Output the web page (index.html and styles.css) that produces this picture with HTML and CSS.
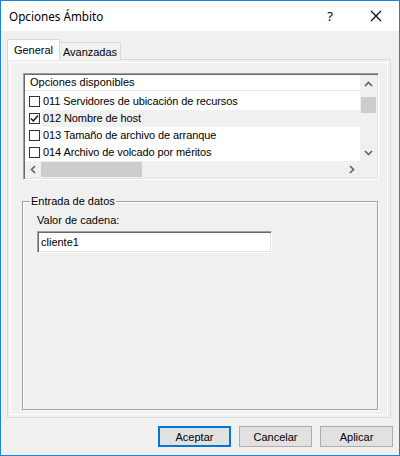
FILE: index.html
```
<!DOCTYPE html>
<html lang="es">
<head>
<meta charset="utf-8">
<title>Opciones Ámbito</title>
<link rel="stylesheet" href="styles.css">
</head>
<body>
<div class="window">
  <div class="titlebar">
    <span class="title">Opciones Ámbito</span>
    <span class="help">?</span>
    <span class="close"><svg width="12" height="12" viewBox="0 0 12 12"><path d="M1 1L11 11M11 1L1 11" stroke="#000" stroke-width="1.1" fill="none"/></svg></span>
  </div>
  <div class="body">
    <div class="tabs">
      <div class="tab active">General</div>
      <div class="tab">Avanzadas</div>
    </div>
    <div class="panel">
      <div class="listview">
        <div class="lv-main">
          <div class="lv-content">
            <div class="lv-header">Opciones disponibles</div>
            <div class="lv-rows">
              <div class="row"><span class="check"></span><span class="label">011 Servidores de ubicación de recursos</span></div>
              <div class="row"><span class="check checked"><svg width="9" height="9" viewBox="0 0 9 9"><path d="M1 4.5L3.3 7L8 1.5" stroke="#222" stroke-width="1.6" fill="none"/></svg></span><span class="label selected">012 Nombre de host</span></div>
              <div class="row"><span class="check"></span><span class="label">013 Tamaño de archivo de arranque</span></div>
              <div class="row"><span class="check"></span><span class="label">014 Archivo de volcado por méritos</span></div>
            </div>
          </div>
          <div class="vscroll">
            <div class="arrow"><svg width="9" height="6" viewBox="0 0 9 6"><path d="M1 5L4.5 1.5L8 5" stroke="#606060" stroke-width="1.6" fill="none"/></svg></div>
            <div class="vtrack"><div class="vthumb"></div></div>
            <div class="arrow"><svg width="9" height="6" viewBox="0 0 9 6"><path d="M1 1L4.5 4.5L8 1" stroke="#606060" stroke-width="1.6" fill="none"/></svg></div>
          </div>
        </div>
        <div class="hscroll">
          <div class="harrow"><svg width="6" height="9" viewBox="0 0 6 9"><path d="M5 1L1.5 4.5L5 8" stroke="#606060" stroke-width="1.6" fill="none"/></svg></div>
          <div class="htrack"><div class="hthumb"></div></div>
          <div class="harrow"><svg width="6" height="9" viewBox="0 0 6 9"><path d="M1 1L4.5 4.5L1 8" stroke="#606060" stroke-width="1.6" fill="none"/></svg></div>
          <div class="corner"></div>
        </div>
      </div>
      <fieldset class="group">
        <legend>Entrada de datos</legend>
        <div class="field-label">Valor de cadena:</div>
        <div class="input">cliente1</div>
      </fieldset>
    </div>
    <div class="buttons">
      <div class="btn default">Aceptar</div>
      <div class="btn">Cancelar</div>
      <div class="btn">Aplicar</div>
    </div>
  </div>
</div>
</body>
</html>
```
FILE: styles.css
```
* { box-sizing: border-box; }
html, body { margin: 0; padding: 0; background: #f0f0f0; }
body {
  font-family: "Liberation Sans", Arial, sans-serif;
  font-size: 11px;
  color: #000;
}
.window {
  width: 400px;
  height: 456px;
  border: 1px solid #1883d7;
  background: #f0f0f0;
  display: flex;
  flex-direction: column;
}
.titlebar {
  height: 30px;
  background: #fff;
  display: flex;
  align-items: center;
  padding-left: 8px;
  flex: none;
}
.title {
  font-family: "Noto Sans", "Liberation Sans", sans-serif;
  font-size: 11.7px;
  flex: 1;
  padding-bottom: 1px;
}
.help {
  font-family: "Noto Sans", "Liberation Sans", sans-serif;
  font-size: 13px;
  width: 46px;
  text-align: center;
}
.close {
  width: 46px;
  display: flex;
  justify-content: center;
  align-items: center;
}
.body {
  flex: 1;
  padding-top: 8px;
  display: flex;
  flex-direction: column;
}
.tabs {
  height: 21px;
  display: flex;
  align-items: flex-end;
  padding-left: 6px;
  position: relative;
  z-index: 1;
}
.tab {
  height: 18px;
  border: 1px solid #d9d9d9;
  border-bottom: none;
  background: #f0f0f0;
  display: flex;
  align-items: center;
  justify-content: center;
  width: 62px;
  margin-left: -1px;
  padding-top: 1px;
}
.tab.active {
  height: 21px;
  width: 53px;
  margin-left: 0;
  background: #fff;
  padding-bottom: 2px;
  position: relative;
  z-index: 2;
}
.panel {
  margin-top: -1px;
  margin-left: 6px;
  width: 384px;
  height: 359px;
  border: 1px solid #d9d9d9;
  background: #f0f0f0;
  box-shadow: inset 0 0 0 2px #f0f0f0, inset 0 0 0 3px #fff;
  padding: 13px 0 0 15px;
  flex: none;
}
.listview {
  width: 356px;
  height: 107px;
  border: 1px solid;
  border-color: #a0a0a0 #fff #fff #a0a0a0;
  box-shadow: inset 1px 1px 0 #696969, inset -1px -1px 0 #e3e3e3;
  padding: 1px;
  background: #fff;
  display: flex;
  flex-direction: column;
}
.lv-main {
  height: 86px;
  display: flex;
}
.lv-content {
  flex: 1;
  background: #fff;
  overflow: hidden;
}
.lv-header {
  height: 16px;
  border-bottom: 1px solid #e5e5e5;
  padding-left: 5px;
  line-height: 15px;
  white-space: nowrap;
}
.lv-rows { padding-top: 2px; }
.row {
  height: 17px;
  display: flex;
  align-items: center;
  padding-left: 4px;
  white-space: nowrap;
}
.check {
  width: 11px;
  height: 11px;
  border: 1px solid #333;
  background: #fff;
  margin-right: 2px;
  display: flex;
  align-items: center;
  justify-content: center;
  flex: none;
}
.label {
  height: 17px;
  line-height: 17px;
  padding-left: 1px;
  letter-spacing: -0.1px;
}
.label.selected {
  flex: 1;
  background: #f0f0f0;
}
.vscroll {
  width: 17px;
  background: #f0f0f0;
  display: flex;
  flex-direction: column;
}
.arrow {
  height: 17px;
  display: flex;
  align-items: center;
  justify-content: center;
  flex: none;
}
.vtrack {
  flex: 1;
  padding: 5px 1px 0 1px;
}
.vthumb {
  height: 16px;
  background: #cdcdcd;
}
.hscroll {
  height: 17px;
  display: flex;
  background: #f0f0f0;
}
.harrow {
  width: 16px;
  display: flex;
  align-items: center;
  justify-content: center;
  flex: none;
}
.htrack {
  flex: 1;
  padding: 1px 0;
}
.hthumb {
  width: 101px;
  height: 100%;
  background: #cdcdcd;
}
.corner {
  width: 17px;
  background: #f0f0f0;
}
.group {
  margin: 15px 0 0 -1px;
  width: 356px;
  height: 215px;
  padding: 0 0 0 14px;
  border: 1px solid #a0a0a0;
  box-shadow: 1px 1px 0 #fff, inset 1px 1px 0 #fff;
  min-inline-size: 0;
}
.group legend {
  padding: 0 1px;
  margin-left: -7px;
  line-height: 13px;
}
.field-label {
  margin-top: 6px;
  line-height: 13px;
}
.input {
  margin-top: 4px;
  width: 235px;
  height: 22px;
  border: 1px solid;
  border-color: #a0a0a0 #fff #fff #a0a0a0;
  box-shadow: inset 1px 1px 0 #696969, inset -1px -1px 0 #e3e3e3;
  background: #fff;
  padding-left: 3px;
  line-height: 20px;
}
.buttons {
  display: flex;
  justify-content: flex-end;
  gap: 8px;
  padding: 8px 6px 0 0;
}
.btn {
  width: 73px;
  height: 21px;
  border: 1px solid #adadad;
  background: #e1e1e1;
  display: flex;
  align-items: center;
  justify-content: center;
}
.btn.default {
  border: 2px solid #0078d7;
}
```
